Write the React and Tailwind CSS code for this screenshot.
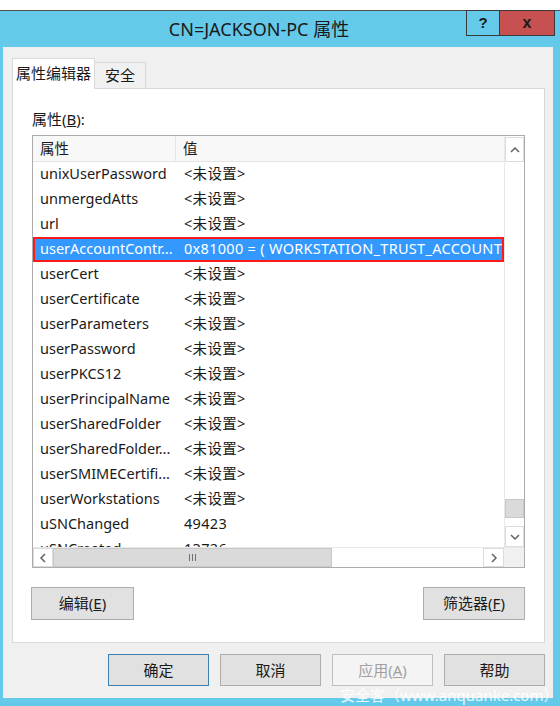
import React from "react";

const rows = [
  ["unixUserPassword", "<未设置>"],
  ["unmergedAtts", "<未设置>"],
  ["url", "<未设置>"],
  ["userAccountContr...", "0x81000 = ( WORKSTATION_TRUST_ACCOUNT | TRUSTED_FOR_DELEGATION )", true],
  ["userCert", "<未设置>"],
  ["userCertificate", "<未设置>"],
  ["userParameters", "<未设置>"],
  ["userPassword", "<未设置>"],
  ["userPKCS12", "<未设置>"],
  ["userPrincipalName", "<未设置>"],
  ["userSharedFolder", "<未设置>"],
  ["userSharedFolder...", "<未设置>"],
  ["userSMIMECertifi...", "<未设置>"],
  ["userWorkstations", "<未设置>"],
  ["uSNChanged", "49423"],
  ["uSNCreated", "13726"],
];

function Chevron({ dir }) {
  const pts = {
    up: "1,6 5,2 9,6",
    down: "1,2 5,6 9,2",
    left: "6,1 2,5 6,9",
    right: "2,1 6,5 2,9",
  }[dir];
  const w = dir === "up" || dir === "down" ? 10 : 8;
  const h = dir === "up" || dir === "down" ? 8 : 10;
  return (
    <svg width={w} height={h} viewBox={`0 0 ${w} ${h}`}>
      <polyline points={pts} fill="none" stroke="#606060" strokeWidth="1.5" />
    </svg>
  );
}

function Btn({ children, className = "" }) {
  return (
    <div
      className={`flex items-center justify-center border text-[15px] ${className}`}
    >
      {children}
    </div>
  );
}

export default function App() {
  return (
    <div className="relative w-[560px] h-[706px] bg-white overflow-hidden font-['Noto_Sans','Noto_Sans_CJK_SC',sans-serif] text-[#1a1a1a]">
      <div className="h-[10px] bg-white" />
      <div className="h-[696px] bg-[#65c9ea] border-t border-[#505050] flex flex-col">
        {/* title bar */}
        <div className="relative h-[36px] flex items-center justify-center pr-[42px]">
          <span className="text-[18px] text-[#1a1a1a]">CN=JACKSON-PC 属性</span>
          <div className="absolute top-[-1px] right-[5px] flex">
            <div className="w-[34px] h-[26px] border border-[#3a3a3a] flex items-center justify-center font-bold text-[15px] font-['Liberation_Sans',sans-serif]">
              ?
            </div>
            <div className="w-[55px] h-[26px] bg-[#c75050] border border-l-0 border-[#3a3a3a] flex items-center justify-center font-bold text-[16px] font-['Liberation_Sans',sans-serif]">
              x
            </div>
          </div>
        </div>
        {/* client */}
        <div className="ml-[3px] mr-[7px] h-[651px] bg-[#f0f0f0] flex flex-col">
          {/* tabs */}
          <div className="flex items-end pl-[9px] pt-[11px] h-[41px] relative z-10">
            <div className="w-[83px] bg-white border border-b-0 border-[#d9d9d9] flex items-center justify-center text-[15px] -mb-[1px] h-[31px] pb-[2px]">
              属性编辑器
            </div>
            <div className="h-[26px] w-[51px] bg-[#f0f0f0] border border-l-0 border-[#d9d9d9] border-b-0 flex items-center justify-center text-[15px]">
              安全
            </div>
          </div>
          {/* panel */}
          <div className="ml-[9px] w-[533px] h-[555px] bg-white border border-[#d9d9d9] flex flex-col">
            <div className="pl-[19px] pt-[19px] text-[15px] h-[46px]">
              属性(<span className="underline">B</span>):
            </div>
            {/* list box */}
            <div className="ml-[19px] w-[493px] h-[433px] border border-[#acacac] flex flex-col">
              <div className="flex h-[411px]">
                <div className="w-[471px] flex flex-col overflow-hidden">
                  <div className="flex h-[26px] bg-[#f8f8f8] border-b border-[#e5e5e5] text-[14.5px] shrink-0">
                    <div className="w-[143px] shrink-0 border-r border-[#e5e5e5] pl-[7px] flex items-center">属性</div>
                    <div className="pl-[7px] flex items-center">值</div>
                  </div>
                  {rows.map(([a, b, sel], i) => (
                    <div
                      key={i}
                      className={`flex h-[25px] shrink-0 text-[14.5px] whitespace-nowrap pb-[1px] ${
                        sel ? "bg-[#3399ff] text-white border-2 border-[#ff1a1a]" : ""
                      }`}
                    >
                      <div className={`shrink-0 flex items-center ${sel ? "w-[141px] pl-[5px]" : "w-[143px] pl-[7px]"}`}>{a}</div>
                      <div className="flex items-center overflow-hidden pl-[8px] tracking-[0.3px]">{b}</div>
                    </div>
                  ))}
                </div>
                {/* vscroll */}
                <div className="w-[20px] flex flex-col bg-white border-l border-[#e8e8e8]">
                  <div className="h-[25px] border border-[#dcdcdc] flex items-center justify-center mt-[1px]">
                    <Chevron dir="up" />
                  </div>
                  <div className="flex-1 flex flex-col">
                    <div className="h-[337px]" />
                    <div className="h-[19px] bg-[#dadada] border border-[#c8c8c8]" />
                    <div className="flex-1" />
                  </div>
                  <div className="h-[21px] border border-[#dcdcdc] flex items-center justify-center">
                    <Chevron dir="down" />
                  </div>
                </div>
              </div>
              {/* hscroll */}
              <div className="flex h-[20px] border-t border-[#e8e8e8]">
                <div className="w-[20px] border border-[#dcdcdc] flex items-center justify-center bg-white">
                  <Chevron dir="left" />
                </div>
                <div className="w-[279px] bg-[#dadada] border border-[#c8c8c8] flex items-center justify-center">
                  <div className="flex gap-[2px]">
                    <div className="w-[1px] h-[7px] bg-[#707070]" />
                    <div className="w-[1px] h-[7px] bg-[#707070]" />
                    <div className="w-[1px] h-[7px] bg-[#707070]" />
                  </div>
                </div>
                <div className="w-[151px] bg-white" />
                <div className="w-[21px] border border-[#dcdcdc] flex items-center justify-center bg-white">
                  <Chevron dir="right" />
                </div>
                <div className="flex-1 bg-[#f0f0f0]" />
              </div>
            </div>
            {/* buttons */}
            <div className="flex justify-between pl-[18px] pr-[19px] pt-[19px]">
              <Btn className="w-[103px] h-[33px] bg-[#e1e1e1] border-[#adadad]">
                编辑(<span className="underline">E</span>)
              </Btn>
              <Btn className="w-[102px] h-[33px] bg-[#e1e1e1] border-[#adadad]">
                筛选器(<span className="underline">F</span>)
              </Btn>
            </div>
          </div>
          {/* dialog buttons */}
          <div className="flex justify-end gap-[11px] pr-[8px] pt-[11px]">
            <Btn className="w-[101px] h-[32px] bg-[#e1e1e1] border-[#3c7fb1]">确定</Btn>
            <Btn className="w-[101px] h-[32px] bg-[#e1e1e1] border-[#adadad]">取消</Btn>
            <Btn className="w-[101px] h-[32px] bg-[#f4f4f4] border-[#bfbfbf] text-[#a0a0a0]">
              应用(<span className="underline">A</span>)
            </Btn>
            <Btn className="w-[101px] h-[32px] bg-[#e1e1e1] border-[#adadad]">帮助</Btn>
          </div>
        </div>
      </div>
      <div className="absolute left-[340px] top-[684px] text-[15px] text-white/85 whitespace-nowrap">
        安全客（www.anquanke.com）
      </div>
    </div>
  );
}
